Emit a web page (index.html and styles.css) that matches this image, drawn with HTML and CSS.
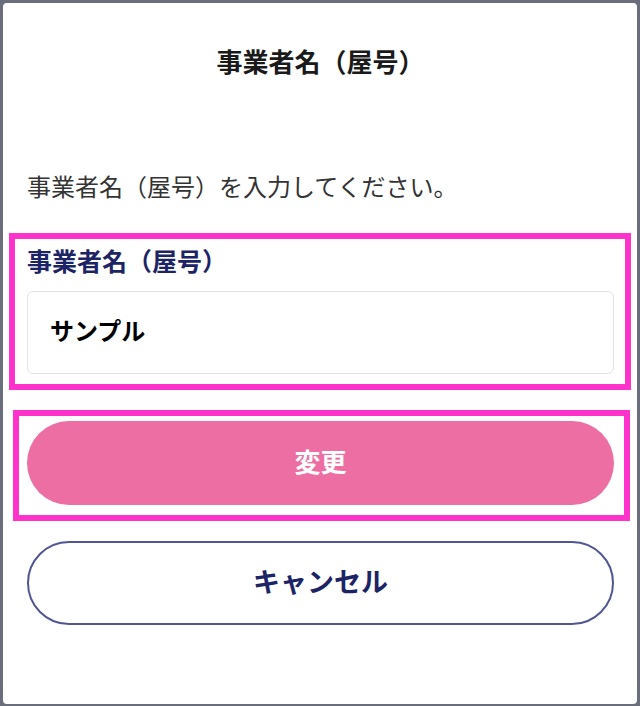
FILE: index.html
```html
<!DOCTYPE html>
<html lang="ja">
<head>
<meta charset="utf-8">
<title>事業者名（屋号）</title>
<link rel="stylesheet" href="styles.css">
</head>
<body>
<div class="modal">
  <h1 class="modal-title">事業者名（屋号）</h1>
  <p class="modal-desc">事業者名（屋号）を入力してください。</p>
  <div class="field mark mark-field">
    <label class="field-label" for="name">事業者名（屋号）</label>
    <input class="field-input" id="name" type="text" value="サンプル">
  </div>
  <div class="mark mark-btn">
    <button class="btn btn-primary" type="button">変更</button>
  </div>
  <button class="btn btn-cancel" type="button">キャンセル</button>
</div>
</body>
</html>
```

FILE: styles.css
```css
html, body {
  margin: 0;
  padding: 0;
}
body {
  background: #6a6e7b;
  padding: 3px 3px 2px 3px;
  font-family: "Noto Sans CJK JP", "Noto Sans", sans-serif;
  width: 640px;
  height: 706px;
  box-sizing: border-box;
}
.modal {
  background: #ffffff;
  border-radius: 4px;
  height: 701px;
  box-sizing: border-box;
  padding: 42px 23px 0 24px;
  display: flex;
  flex-direction: column;
}
.modal-title {
  margin: 0;
  font-size: 26px;
  line-height: 32px;
  padding-bottom: 2px;
  font-weight: 700;
  color: #1a1a1a;
  text-align: center;
}
.modal-desc {
  margin: 91px 0 0 0;
  font-size: 24px;
  line-height: 32px;
  padding-bottom: 0;
  color: #333333;
}
.field {
  margin-top: 42px;
  display: flex;
  flex-direction: column;
}
.field-label {
  font-size: 25px;
  line-height: 32px;
  font-weight: 700;
  color: #1d2466;
}
.field-input {
  margin-top: 15px;
  height: 83px;
  box-sizing: border-box;
  border: 1px solid #e3e3e3;
  border-radius: 6px;
  padding: 0 22px 6px 22px;
  font-family: inherit;
  font-size: 24px;
  font-weight: 700;
  color: #000000;
  background: #ffffff;
}
.mark {
  position: relative;
}
.mark::after {
  content: "";
  position: absolute;
  border: 6px solid #ff33cc;
  pointer-events: none;
}
.mark-field::after {
  left: -18px;
  right: -17px;
  top: -11px;
  bottom: -16px;
}
.mark-btn {
  margin-top: 47px;
  display: flex;
}
.mark-btn::after {
  left: -14px;
  right: -16px;
  top: -11px;
  bottom: -16px;
}
.btn {
  width: 100%;
  height: 84px;
  border-radius: 42px;
  padding: 0 0 6px 0;
  font-family: inherit;
  font-weight: 700;
  box-sizing: border-box;
  cursor: pointer;
}
.btn-primary {
  background: #ec6ea3;
  color: #ffffff;
  border: none;
  font-size: 26px;
}
.btn-cancel {
  margin-top: 36px;
  background: #ffffff;
  color: #1d2466;
  border: 2px solid #4f5693;
  font-size: 27px;
}
```
